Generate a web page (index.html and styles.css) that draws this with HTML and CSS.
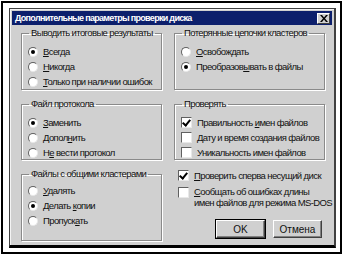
FILE: index.html
```html
<!DOCTYPE html>
<html lang="ru">
<head>
    <meta charset="UTF-8">
    <title>Дополнительные параметры проверки диска</title>
    <link rel="stylesheet" href="styles.css">
</head>
<body>
    <div class="frame">
        <div class="dialog">
            <div class="titlebar">
                <span class="title">Дополнительные параметры проверки диска</span>
                <span class="close">
                    <svg width="8" height="7" viewBox="0 0 8 7"><path d="M0 0h2l2 2.5L6 0h2L5 3.5 8 7H6L4 4.5 2 7H0l3-3.5z" fill="#000"/></svg>
                </span>
            </div>
            <div class="body">
                <fieldset class="group">
                    <legend>Выводить итоговые результаты</legend>
                    <label class="opt"><span class="radio on"></span><span><u>В</u>сегда</span></label>
                    <label class="opt"><span class="radio"></span><span><u>Н</u>икогда</span></label>
                    <label class="opt"><span class="radio"></span><span><u>Т</u>олько при наличии ошибок</span></label>
                </fieldset>
                <fieldset class="group">
                    <legend>Потерянные цепочки кластеров</legend>
                    <label class="opt"><span class="radio"></span><span><u>О</u>свобождать</span></label>
                    <label class="opt"><span class="radio on"></span><span>Преобразов<u>ы</u>вать в файлы</span></label>
                </fieldset>
                <fieldset class="group">
                    <legend>Файл протокола</legend>
                    <label class="opt"><span class="radio on"></span><span><u>З</u>аменить</span></label>
                    <label class="opt"><span class="radio"></span><span>Допол<u>н</u>ить</span></label>
                    <label class="opt"><span class="radio"></span><span>Н<u>е</u> вести протокол</span></label>
                </fieldset>
                <fieldset class="group">
                    <legend>Проверять</legend>
                    <label class="opt"><span class="check on"></span><span>Правильность <u>и</u>мен файлов</span></label>
                    <label class="opt"><span class="check"></span><span>Дату и время создания файлов</span></label>
                    <label class="opt"><span class="check"></span><span>Уникальность имен файлов</span></label>
                </fieldset>
                <fieldset class="group shared">
                    <legend>Файлы с общими кластерами</legend>
                    <label class="opt"><span class="radio"></span><span><u>У</u>далять</span></label>
                    <label class="opt"><span class="radio on"></span><span>Делать <u>к</u>опии</span></label>
                    <label class="opt"><span class="radio"></span><span>Пропуск<u>а</u>ть</span></label>
                </fieldset>
                <div class="extra">
                    <label class="opt"><span class="check on"></span><span><u>П</u>роверить сперва несущий диск</span></label>
                    <label class="opt two"><span class="check"></span><span><u>С</u>ообщать об ошибках длины<br>имен файлов для режима MS-DOS</span></label>
                    <div class="buttons">
                        <button class="btn default">OK</button>
                        <button class="btn">Отмена</button>
                    </div>
                </div>
            </div>
        </div>
    </div>
</body>
</html>
```
FILE: styles.css
```css
body {
    margin: 0;
    background: #fff;
    font-family: "Liberation Sans", "DejaVu Sans", sans-serif;
    font-size: 9.5px;
    letter-spacing: -0.6px;
    color: #111;
}
.frame {
    margin: 1px;
    width: 337px;
    height: 249px;
    border: 2px solid #000;
}
.dialog {
    margin: 5px 0 0 6px;
    width: 327px;
    height: 240px;
    box-sizing: border-box;
    background: #d0d0d0;
    border: 1px solid #404040;
    border-right-width: 2px;
    border-bottom: 3px solid #000;
    box-shadow: inset 1px 1px 0 #f4f4f4;
    display: flex;
    flex-direction: column;
}
.titlebar {
    margin: 2px 2px 0 2px;
    height: 14px;
    background: #0c1f6c;
    display: flex;
    align-items: center;
    justify-content: space-between;
    padding: 0 2px 0 3px;
}
.title {
    color: #fff;
    font-weight: bold;
    font-size: 9px;
    letter-spacing: -0.7px;
    line-height: 14px;
}
.close {
    width: 13px;
    height: 11px;
    background: #d0d0d0;
    border: 1px solid;
    border-color: #fff #404040 #404040 #fff;
    box-sizing: border-box;
    display: flex;
    align-items: center;
    justify-content: center;
}
.body {
    flex: 1;
    padding: 2px 0 4px 11px;
    display: grid;
    grid-template-columns: 141px 151px;
    grid-template-rows: 63px 62px 1fr;
    column-gap: 12px;
    row-gap: 8px;
}
.group {
    margin: 0;
    padding: 5px 0 0 6px;
    min-width: 0;
    border: 1px solid #8a8a8a;
    box-shadow: 1px 1px 0 #fff, inset 1px 1px 0 #fff;
}
.group.shared {
    padding-top: 3px;
}
.group legend {
    padding: 0 2px;
    margin-left: 1px;
    line-height: 12px;
    white-space: nowrap;
}
.opt {
    display: flex;
    align-items: center;
    gap: 5px;
    height: 15px;
    white-space: nowrap;
}
.radio {
    width: 10px;
    height: 10px;
    border-radius: 50%;
    background: #fff;
    border: 1px solid;
    border-color: #606060 #e8e8e8 #e8e8e8 #606060;
    box-sizing: border-box;
    display: flex;
    align-items: center;
    justify-content: center;
    flex: none;
}
.radio.on::after {
    content: "";
    width: 4px;
    height: 4px;
    border-radius: 50%;
    background: #000;
}
.check {
    width: 11px;
    height: 11px;
    background: #fff;
    border: 1px solid;
    border-color: #606060 #e8e8e8 #e8e8e8 #606060;
    box-sizing: border-box;
    flex: none;
    position: relative;
}
.check.on::after {
    content: "";
    position: absolute;
    left: 2px;
    top: 0;
    width: 3px;
    height: 6px;
    border: solid #000;
    border-width: 0 2px 2px 0;
    transform: rotate(40deg);
}
.extra {
    display: flex;
    flex-direction: column;
    padding: 0 0 0 4px;
}
.opt.two {
    height: auto;
    align-items: flex-start;
    margin-top: 3px;
    line-height: 11px;
}
.opt.two .check {
    margin-top: 1px;
}
.buttons {
    display: flex;
    justify-content: flex-end;
    gap: 8px;
    margin-top: auto;
    padding: 0 3px 3px 0;
}
.btn {
    width: 49px;
    height: 18px;
    padding: 0;
    font-family: inherit;
    font-size: 10px;
    letter-spacing: 0;
    color: #111;
    background: #d0d0d0;
    border: 1px solid;
    border-color: #fff #404040 #404040 #fff;
    box-shadow: inset -1px -1px 0 #808080;
}
.btn.default {
    outline: 1px solid #000;
}
```
